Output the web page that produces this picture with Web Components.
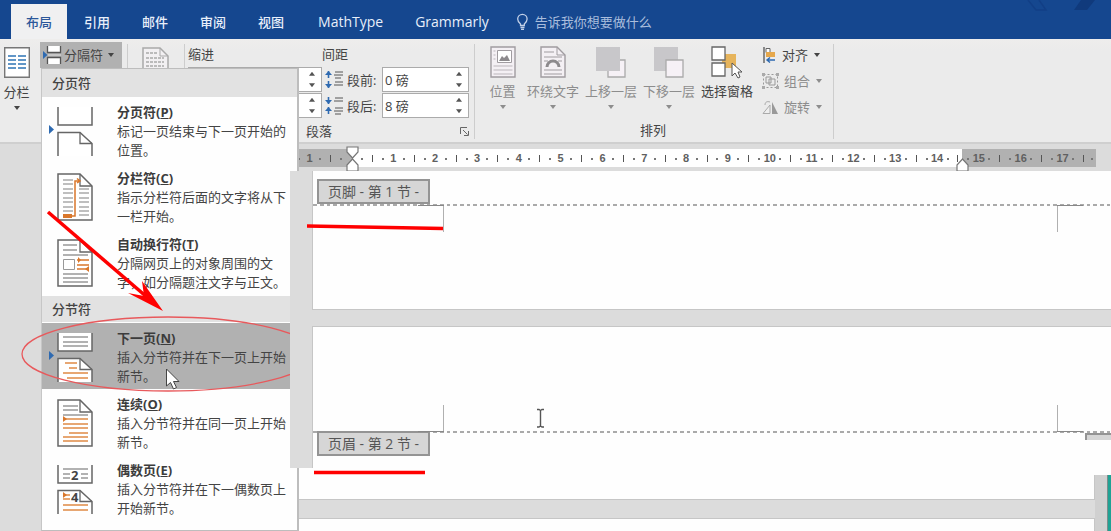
<!DOCTYPE html>
<html lang="zh-CN">
<head>
<meta charset="utf-8">
<title>Word</title>
<style>
html,body{margin:0;height:100%}
body{font:13px/20px "Open Sans","Noto Sans CJK SC",sans-serif;color:#444;background:#dcdcdc;overflow:hidden}
</style>
</head>
<body>
<word-app></word-app>
<script>
const define=(name,html,setup)=>customElements.define(name,class extends HTMLElement{
  constructor(){
    super();
    const t=document.createElement('template');
    t.innerHTML=`<style>*{box-sizing:border-box}button,input{font:inherit;color:inherit;margin:0;padding:0;border:0;background:none;border-radius:0}button{white-space:nowrap}svg{display:block}[hidden]{display:none}</style>`+html;
    this.attachShadow({mode:'open'}).appendChild(t.content.cloneNode(true));
    if(setup)setup(this,this.shadowRoot);
  }
});

/* ---- title tabs ---- */
define('ribbon-tab',`<style>
:host{display:flex;color:#e8effa}
button{padding:0 15px;font-weight:500}
:host([selected]) button{background:#f0f0f1;color:#2b579a}
:host([latin]) button{font-size:14px}
</style><button role="tab"><slot></slot></button>`);

define('tab-bar',`<style>
:host{display:flex;gap:2px;height:39px;padding:4px 0 0 11px;background:#15478f;position:relative}
.addins{display:flex;gap:2px;margin-left:2px}
.tell{display:flex;align-items:center;gap:6px;margin-left:10px;color:#a9bddc}
.deco{position:absolute;right:10px;top:0}
</style>
<ribbon-tab selected>布局</ribbon-tab><ribbon-tab>引用</ribbon-tab><ribbon-tab>邮件</ribbon-tab><ribbon-tab>审阅</ribbon-tab><ribbon-tab>视图</ribbon-tab>
<div class="addins"><ribbon-tab latin>MathType</ribbon-tab><ribbon-tab latin>Grammarly</ribbon-tab></div>
<button class="tell"><svg width="13" height="18" viewBox="0 0 13 18" fill="none" stroke="#c3d1e8" stroke-width="1.3"><path d="M4.5 12.5V11C3 9.8 1.7 8.4 1.7 6a4.7 4.7 0 0 1 9.4 0c0 2.4-1.300 3.800-2.800 5v1.500zM4.500 14.500h4M5 16.300h3"/></svg>告诉我你想要做什么</button>
<svg class="deco" width="75" height="14" viewBox="0 0 75 14"><path d="M2 0l8 10h10L13 0" fill="none" stroke="#123f86" stroke-width="1.500"/><path d="M48 10h13l8-10H55z" fill="#103a7c"/></svg>`);

/* ---- ribbon ---- */
define('drop-caret',`<style>:host{display:block;width:0;height:0;border:3px solid transparent;border-top:4px solid currentColor;border-bottom:0}</style>`);

define('big-button',`<style>
:host{display:block}
button{width:100%;display:flex;flex-direction:column;align-items:center}
.icon{height:35px}
drop-caret{margin-top:4px}
:host([muted]){color:#8d8d8d}
:host([nocaret]) drop-caret{visibility:hidden}
</style><button><span class="icon"><slot name="icon"></slot></span><span><slot></slot></span><drop-caret></drop-caret></button>`);

define('small-button',`<style>
:host{display:block}
button{height:26px;display:flex;align-items:center;gap:5px}
drop-caret{margin-left:1px}
:host([muted]){color:#8d8d8d}
:host([pressed]) button{background:#b1b1b1;height:26px;gap:2px;padding:0 8px 0 2px}
:host([pressed]) drop-caret{margin-left:3px}
</style><button><slot name="icon"></slot><span><slot></slot></span><drop-caret></drop-caret></button>`);

define('spin-field',`<style>
:host{display:grid;grid-template-columns:60px 87px}
:host([bare]){grid-template-columns:134px}
:host([bare]) label{display:none}
label{display:flex;align-items:center;gap:4px;padding-left:3px;white-space:nowrap}
.box{display:flex;height:25px;background:#fff;border:1px solid #ababab}
input{flex:1;min-width:0;padding-left:2px}
.spin{width:18px;display:flex;flex-direction:column;justify-content:space-around;align-items:center}
.spin button{width:6px;height:4px;background:#555;clip-path:polygon(50% 0,100% 100%,0 100%)}
.spin button+button{clip-path:polygon(0 0,100% 0,50% 100%)}
</style><label for="v"><slot name="icon"></slot><slot></slot></label>
<span class="box"><input id="v"><span class="spin"><button aria-label="+"></button><button aria-label="-"></button></span></span>`,
(h,r)=>{const i=r.querySelector('input');i.value=h.getAttribute('value')||'';if(h.title)i.setAttribute('aria-label',h.title)});

define('ribbon-bar',`<style>
:host{display:flex;height:105px;background:linear-gradient(#eeedec,#ebebeb 12px);border-bottom:2px solid #cfcfcf;padding:5px 0 4px}
.group{border-right:1px solid #cdcdcd;display:flex;flex-direction:column;height:95px}
.cols{width:40px;padding-top:3px}
.cols big-button{margin-left:-7px}
.breaks{width:88px;padding-left:0}
.breaks small-button{margin-top:-2px}
.lines{width:57px;padding:3px 0 0 14px}
.para{width:290px;padding-left:3px}
.grid{display:grid;grid-template-columns:134px 147px;grid-template-rows:22px 25px 25px;row-gap:1px;line-height:20px}
.foot{display:flex;justify-content:space-between;align-items:center;padding:3px 5px 0 118px}
.arr{width:359px;padding-left:6px}
.row{display:flex;height:78px}
.row>big-button{width:58px;padding-top:2px}
.row>big-button:first-child{width:43px}
.stack{margin:-2px 0 0 6px}
.caption{text-align:center;padding-right:8px}
</style>
<div class="cols"><big-button><svg slot="icon" width="26" height="31" viewBox="0 0 26 31"><path d="M.7.7h24.600v29.600H.7z" fill="#fff" stroke="#777" stroke-width="1.400"/><g stroke="#2e74b5" stroke-width="1.600"><path d="M4 9h8M4 13h8M4 17h8M4 21h8M14 9h8M14 13h8M14 17h8M14 21h8"/></g></svg>分栏</big-button></div>
<div class="group breaks"><small-button pressed><svg slot="icon" width="20" height="20" viewBox="0 0 20 20"><path d="M5.500 1v6.500h13V1M5.500 19v-6.500h13V19" fill="#fff" stroke="#555" stroke-width="1.300"/><path d="M1 6l4.500 4L1 14z" fill="#2e6ab1"/><path d="M6 10h13" stroke="#ddd"/></svg>分隔符</small-button></div>
<div class="group lines"><svg width="27" height="32" viewBox="0 0 27 32"><path d="M1 1h17l8 8v22H1z" fill="#f2f0f2" stroke="#a9a9a9" stroke-width="1.500"/><path d="M18 1v8h8" fill="none" stroke="#a9a9a9"/><path d="M4 6h11M4 11h18M4 15h18M4 19h18M4 23h18" stroke="#bbb" stroke-width="2" stroke-dasharray="3 1"/></svg></div>
<div class="group para"><div class="grid"><span>缩进</span><span>间距</span>
<spin-field bare title="左缩进"></spin-field>
<spin-field value="0 磅"><svg slot="icon" width="18" height="19" viewBox="0 0 18 19"><path d="M3.500 1v7M3.500 11v7" stroke="#2e6ab1" stroke-width="1.600"/><path d="M0 5l3.500-4L7 5zM0 14l3.500 4L7 14z" fill="#2e6ab1"/><path d="M10 2h8M9 5h9M10 8h6M10 12h8M9 15h9" stroke="#555"/></svg>段前:</spin-field>
<spin-field bare title="右缩进"></spin-field>
<spin-field value="8 磅"><svg slot="icon" width="18" height="19" viewBox="0 0 18 19"><path d="M3.500 1v7M3.500 11v7" stroke="#2e6ab1" stroke-width="1.600"/><path d="M0 4l3.500 4L7 4zM0 15l3.500-4L7 15z" fill="#2e6ab1"/><path d="M10 2h8M9 5h9M10 12h8M9 15h9M10 18h6" stroke="#555"/></svg>段后:</spin-field></div>
<div class="foot"><span>段落</span><button aria-label="段落设置"><svg width="9" height="9" viewBox="0 0 9 9" fill="none" stroke="#666"><path d="M.500 7V.500H7M3 3l4.500 4.500M8.500 4v4.500H4"/></svg></button></div></div>
<div class="group arr"><div class="row">
<big-button muted><svg slot="icon" width="26" height="32" viewBox="0 0 26 32"><path d="M1 1h24v30H1z" fill="#f4f0f4" stroke="#a09ca0" stroke-width="1.400"/><path d="M7.500 4.500h14v12h-14z" fill="#fff" stroke="#a09ca0"/><path d="M9 15l3-5 2 2 3-3 3 6z" fill="#8d8a8d"/><path d="M3.500 5h2M3.500 9h2M3.500 13h2M3.500 20h19M3.500 24h19M3.500 28h19" stroke="#bbb6bb"/></svg>位置</big-button>
<big-button muted><svg slot="icon" width="26" height="32" viewBox="0 0 26 32"><path d="M1 1h16l8 8v22H1z" fill="#f4f0f4" stroke="#a09ca0" stroke-width="1.400"/><path d="M17 1v8h8M4 6h10M4 11h18M4 15h4M18 15h4M4 24h18M4 28h18" fill="none" stroke="#a09ca0"/><path d="M7 21a6 6 0 0 1 12 0" fill="none" stroke="#8d8a8d" stroke-width="3"/></svg>环绕文字</big-button>
<big-button muted><svg slot="icon" width="30" height="32" viewBox="0 0 30 32"><path d="M12 14h17v17H12z" fill="#f6f1f6" stroke="#aaa" stroke-width="1.300"/><path d="M0 1h24v24H0z" fill="#c8c7ca"/></svg>上移一层</big-button>
<big-button muted><svg slot="icon" width="30" height="32" viewBox="0 0 30 32"><path d="M0 1h24v24H0z" fill="#c8c7ca"/><path d="M12 14h17v17H12z" fill="#f6f1f6" stroke="#aaa" stroke-width="1.300"/></svg>下移一层</big-button>
<big-button nocaret><svg slot="icon" width="32" height="34" viewBox="0 0 32 34"><path d="M11 8h14v14H11z" fill="#e6b45c"/><path d="M1 1h13v13H1zM1 17h13v13H1z" fill="#fff" stroke="#666" stroke-width="1.300"/><path d="M21 17v13l3-3 3 5 2-1-2-5h4z" fill="#fff" stroke="#555"/></svg>选择窗格</big-button>
<div class="stack">
<small-button><svg slot="icon" width="15" height="16" viewBox="0 0 15 16"><path d="M2 0v16" stroke="#555" stroke-width="1.300"/><path d="M4 1.500h4v4H4z" fill="#fff" stroke="#666"/><path d="M4 5h9v5H4z" fill="#e6a84c"/><path d="M13 13H5M8 10.500L5 13l3 2.500" fill="none" stroke="#2e6ab1" stroke-width="1.400"/></svg>对齐</small-button>
<small-button muted><svg slot="icon" width="17" height="16" viewBox="0 0 17 16" fill="none" stroke="#999"><path d="M1.500 1.500h14v13h-14z" stroke-dasharray="2 2"/><path d="M4 4h5v6H4zM7 6h6v6H7z"/><path d="M0 0h3v3H0zM14 0h3v3h-3zM0 13h3v3H0zM14 13h3v3h-3z" fill="#aaa" stroke="none"/></svg>组合</small-button>
<small-button muted><svg slot="icon" width="17" height="15" viewBox="0 0 17 15"><path d="M1 13.500h7V5z" fill="#eee" stroke="#aaa"/><path d="M10 2v12h6z" fill="#999"/><path d="M3 5c0-3 2-4 5-3" fill="none" stroke="#aaa"/></svg>旋转</small-button>
</div></div><div class="caption">排列</div></div>`);

/* ---- ruler ---- */
define('doc-ruler',`<style>
:host{display:block;height:27px;padding:5px 15px 0 294px;background:#dcdcdc}
.scale{position:relative;display:grid;grid-template-columns:repeat(76,1fr) .7fr;height:18px;font:bold 11px/19px "Liberation Sans",sans-serif;color:#606060;background:linear-gradient(90deg,#b1b1b1 7.200%,#fff 7.200% 83.300%,#b1b1b1 83.300%)}
span{width:0;justify-self:center;display:flex;justify-content:center;align-items:center}
.dot::before{content:"";flex:none;width:2px;height:2px;background:#777}
.bar::before{content:"";flex:none;width:1px;height:7px;background:#555}
svg{position:absolute;top:-3px;margin-left:-6px}
.ind{left:7.200%}.rt{left:83.300%}
</style><div class="scale"></div>`,
(h,r)=>{
  const s=r.querySelector('.scale');
  for(let i=-5;i<=71;i++){
    const c=document.createElement('span'),m=((i%4)+4)%4;
    if(i&&m===0)c.textContent=Math.abs(i/4);
    else if(m===2)c.className='bar';
    else if(m)c.className='dot';
    s.append(c);
  }
  s.insertAdjacentHTML('beforeend','<svg class="ind" width="13" height="26" viewBox="0 0 13 26" fill="#fff" stroke="#777" stroke-width="1.200"><path d="M1 1h11v5l-5.500 6L1 6zM1 25h11v-6l-5.500-6L1 19z"/></svg><svg class="rt" width="13" height="26" viewBox="0 0 13 26" fill="#fff" stroke="#777" stroke-width="1.200"><path d="M1 25h11v-6l-5.500-6L1 19z"/></svg>');
});

/* ---- document pages ---- */
define('section-tag',`<style>:host{display:flex;align-items:center;justify-content:center;width:max-content;min-width:113px;height:25px;padding:0 7px;border:2px solid #949494;background:#d6d6d6;color:#555;font-size:14px;white-space:pre}</style><slot></slot>`);

define('doc-pages',`<style>
:host{display:block}
.front{position:relative;z-index:3;margin-left:290px;padding-left:22px;background:#dcdcdc}
.page{background:#fefefe;border-left:1px solid #c6c6c6}
.p1{height:139px;border-bottom:1px solid #c6c6c6;padding-top:8px}
.p2{height:142px;border-top:1px solid #c6c6c6;margin-top:16px;padding-top:78px}
section-tag{margin-left:4px}
.p2 section-tag{margin-top:-2px}
.dash{height:2px;background:repeating-linear-gradient(90deg,#aaa 0 4px,transparent 4px 7px,#aaa 7px 11px,transparent 11px 14px,#aaa 14px 17px,transparent 17px 20px)}
.marks{height:26px;margin:0 53px 0 130px;border:1px solid #b0b0b0;border-width:0 1px;position:relative}
.marks::before,.marks::after{content:"";position:absolute;width:26px;height:1px;background:#888;top:-1px}
.marks::before{right:100%}.marks::after{left:100%}
.p2 .marks::before,.p2 .marks::after{top:auto;bottom:-1px}
.tags{display:flex;justify-content:space-between;align-items:flex-start}
.clip{width:26px;height:7px;border:2px solid #949494;border-width:2px 0 0 2px;background:#d6d6d6}
.back{margin-left:299px;display:grid;grid-template-columns:1fr 12px 4px;grid-template-rows:7px 25px 18px 1fr;height:63px;background:#dcdcdc}
.w{background:#fefefe}.full{grid-column:1/4}
.a{border:1px solid #c6c6c6;border-width:0 1px 1px 0}.b{border:1px solid #c6c6c6;border-width:1px 1px 0 0;grid-row:4}
.rail{grid-column:2;grid-row:2/5;background:#d0d0d0}.edge{grid-column:3;grid-row:2/5;background:#1fa294;border-left:1px solid #7d8c8b}
</style>
<div class="front"><div class="page p1"><section-tag>页脚 - 第 1 节 -</section-tag><div class="dash"></div><div class="marks"></div></div>
<div class="page p2"><div class="marks"></div><div class="dash"></div><div class="tags"><section-tag>页眉 - 第 2 节 -</section-tag><div class="clip"></div></div></div></div>
<div class="back"><div class="w full"></div><div class="w a"></div><div class="w b"></div><div class="rail"></div><div class="edge"></div></div>`);

/* ---- breaks menu ---- */
define('break-item',`<style>
:host{display:block}
button{display:grid;grid-template-columns:75px 1fr;width:100%;height:66px;padding:5px 0 0;text-align:left;line-height:19px;overflow:hidden}
:host([active]) button{background:#b1b1b1}
b{display:block;line-height:20px;color:#3c3c3c}
.icon{padding:4px 0 0 7px}
</style><button role="menuitem"><span class="icon"><slot name="icon"></slot></span><span><b><slot name="name"></slot></b><slot></slot></span></button>`);

const arrow='<path d="M0 19l5 4.500L0 28z" fill="#2e6ab1"/>';
const lower='<path d="M9 50V26.500h22l12 11V50" fill="#fff" stroke="#666" stroke-width="1.500"/><path d="M31 26.500v11h12" fill="none" stroke="#666" stroke-width="1.300"/>';
const upper='<path d="M9 1v18h34V1" fill="#fff" stroke="#666" stroke-width="1.500"/>';
const sheet='<path d="M9 2h22l12 12v34H9z" fill="#fff" stroke="#666" stroke-width="1.500"/><path d="M31 2v12h12" fill="none" stroke="#666" stroke-width="1.300"/>';
const icon=b=>`<svg slot="icon" width="46" height="50" viewBox="0 0 46 50">${b}</svg>`;
const ln=(d,c)=>`<path d="${d}" fill="none" stroke="${c}" stroke-width="1.300"/>`;
define('breaks-menu',`<style>
:host{display:block;background:#fefefe;border:1px solid #bdbdbd;border-left-color:#c6c6c6;border-right-width:2px;overflow:hidden}
h2{margin:0;height:28px;padding-left:10px;font:inherit;line-height:28px;font-weight:500;background:#e2e2e2}
break-item+h2{margin:1px 0;height:26px;line-height:26px}
</style>
<div role="menu">
<h2>分页符</h2>
<break-item>${icon(upper+lower+arrow)}<span slot="name">分页符(<u>P</u>)</span>标记一页结束与下一页开始的<br>位置。</break-item>
<break-item>${icon(sheet+ln('M14 8h10M14 12h10M14 17h10M14 21h10M14 26h10M14 30h10M14 35h10M14 39h10M30 17h10M30 21h10M30 26h10M30 30h10M30 35h10M30 39h10M30 43h10','#aaa')+'<path d="M14 42h9v4h-9z" fill="#d9772b"/><path d="M23 44h3V9h4M28 6.500L31 9l-3 2" fill="none" stroke="#d9772b" stroke-width="1.500"/>')}<span slot="name">分栏符(<u>C</u>)</span>指示分栏符后面的文字将从下<br>一栏开始。</break-item>
<break-item>${icon(sheet+ln('M14 7h14M14 12h14M14 17h25M14 40h25M14 44h25M14 36h25','#999')+'<path d="M14.500 21.500h11v10h-11z" fill="#fff" stroke="#999"/>'+ln('M28 22h12M28 27h12M28 31h12','#d9772b')+'<path d="M29 19l3 3-3 3zM40 28l-4 3 4 3z" fill="#d9772b"/>')}<span slot="name">自动换行符(<u>T</u>)</span>分隔网页上的对象周围的文<br>字，如分隔题注文字与正文。</break-item>
<h2>分节符</h2>
<break-item active>${icon(upper+lower+arrow+ln('M14 5h25M14 10h25M14 14h25','#999')+ln('M16 31h12M20 36h8M14 41h25M18 46h21','#e08a45'))}<span slot="name">下一页(<u>N</u>)</span>插入分节符并在下一页上开始<br>新节。</break-item>
<break-item>${icon(sheet+ln('M14 8h15M14 12h15M14 17h25','#999')+ln('M14 21h25M14 26h25M14 30h25M20 35h19M14 39h25M14 43h25','#e08a45')+'<path d="M14 18l4 3-4 3z" fill="#d9772b"/>')}<span slot="name">连续(<u>O</u>)</span>插入分节符并在同一页上开始<br>新节。</break-item>
<break-item>${icon(upper+lower+ln('M14 5h25M14 10h7M32 10h7M14 14h7M32 14h7','#999')+ln('M14 31h7M14 35h7M14 41h25M14 46h25','#e08a45')+'<path d="M14 28l4 3-4 3z" fill="#d9772b"/><g font-family="Open Sans" font-weight="700" font-size="13" fill="#444"><text x="22" y="16">2</text><text x="22" y="38">4</text></g>')}<span slot="name">偶数页(<u>E</u>)</span>插入分节符并在下一偶数页上<br>开始新节。</break-item>
<break-item><span slot="name">奇数页(<u>D</u>)</span></break-item>
</div>`);

/* ---- red annotations and pointers, free on the canvas ---- */
define('mark-overlay',`<style>:host{position:absolute;inset:0;z-index:4;pointer-events:none}</style>
<svg width="100%" height="100%"><clipPath id="c"><path d="M0 0h290v531H0z"/></clipPath>
<ellipse cx="168" cy="354" rx="146" ry="37" fill="none" stroke="#e8595c" stroke-width="1.300" clip-path="url(#c)"/>
<path d="M48 212L148 298" stroke="#f00" stroke-width="3.500"/><path d="M163 311l-35-18 16 3-2-15z" fill="#f00"/>
<path d="M307 226l136 2.500M314 472.500h111" stroke="#f00" stroke-width="3.500"/>
<path d="M166.500 369v17l4-3.500 3 6.500 3-1.500-3-6h5.500z" fill="#fff" stroke="#444"/>
<path d="M537 409.500h2l1.500 1 1.500-1h2M537 427h2l1.500-1 1.500 1h2M540.500 410v17" fill="none" stroke="#555" stroke-width="1.400"/></svg>`);

define('word-app',`<style>
:host{display:block;position:relative;height:100vh;overflow:hidden;background:#dcdcdc}
breaks-menu{position:absolute;z-index:2;left:41px;top:68px;width:258px;bottom:0}
</style><tab-bar></tab-bar><ribbon-bar></ribbon-bar><doc-ruler></doc-ruler><doc-pages></doc-pages><breaks-menu></breaks-menu><mark-overlay></mark-overlay>`);
</script>
</body>
</html>
